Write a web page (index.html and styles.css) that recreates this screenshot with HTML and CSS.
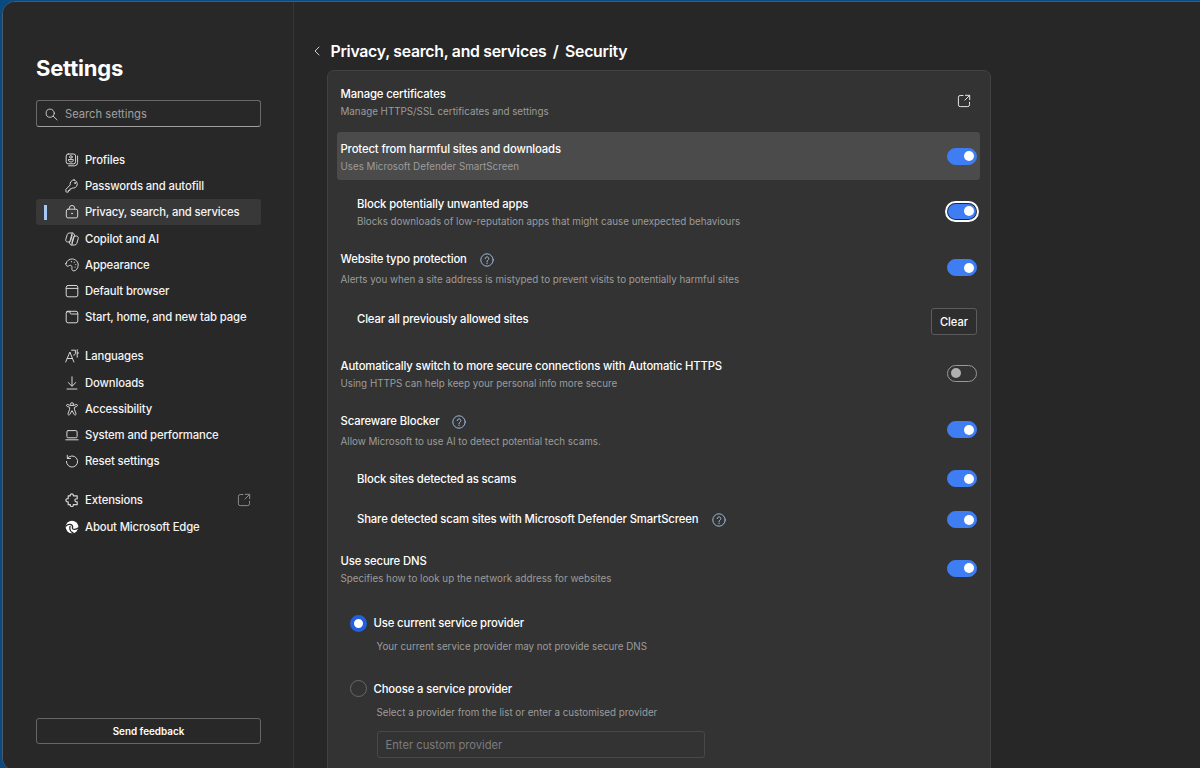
FILE: index.html
```html
<!DOCTYPE html>
<html lang="en">
<head>
    <meta charset="UTF-8">
    <meta name="viewport" content="width=device-width, initial-scale=1.0">
    <title>Settings</title>
    <link rel="stylesheet" href="styles.css">
</head>
<body>
    <!-- Shared icons -->
    <svg width="0" height="0" class="icon-defs">
        <symbol id="icon-open" viewBox="0 0 14 14">
            <path d="M6 1.5H3.2A1.8 1.8 0 0 0 1.4 3.3v7.5a1.8 1.8 0 0 0 1.8 1.8h7.5a1.8 1.8 0 0 0 1.8-1.8V8.2M8.4 1.3h4.3v4.4M12.5 1.5L7.9 6.1"/>
        </symbol>
        <symbol id="icon-help" viewBox="0 0 14 14">
            <circle cx="7" cy="7" r="6.2"/>
            <path d="M5.2 5.6a1.8 1.8 0 1 1 2.8 1.5c-.7.5-1 .8-1 1.5M7 10v.7"/>
        </symbol>
    </svg>

    <div class="window">
        <!-- Sidebar -->
        <aside class="sidebar">
            <h1 class="sidebar-title">Settings</h1>
            <div class="search">
                <svg class="search-icon" viewBox="0 0 14 14"><circle cx="5.6" cy="5.6" r="4.4"/><path d="M8.8 8.8l4.2 4"/></svg>
                <span>Search settings</span>
            </div>

            <nav class="menu">
                <div class="menu-group">
                    <a class="menu-item">
                        <svg class="icon" viewBox="0 0 14 14"><rect x="1.2" y="1" width="9.4" height="9.8" rx="2"/><circle cx="5.9" cy="4" r="1.3"/><path d="M3.5 6.6h4.8v.7c0 1-1 1.7-2.4 1.7s-2.4-.7-2.4-1.7zM12.6 3v6.6a3.2 3.2 0 0 1-3.2 3.2H3.6"/></svg>
                        Profiles
                    </a>
                    <a class="menu-item">
                        <svg class="icon" viewBox="0 0 14 14"><path d="M9.1.9a4 4 0 0 0-3.9 5L.9 10.4v2.1c0 .4.2.6.6.6h1.8v-1.6h1.6V9.9h1.3l.9-.9a4 4 0 1 0 2-8.1z"/><circle cx="10" cy="4" r=".5"/></svg>
                        Passwords and autofill
                    </a>
                    <a class="menu-item selected">
                        <svg class="icon" viewBox="0 0 14 14"><rect x="1.3" y="4.2" width="11.4" height="8.7" rx="1.8"/><path d="M4.3 4V3.2a2.7 2.7 0 0 1 5.4 0V4"/><circle cx="7" cy="8.5" r=".5"/></svg>
                        Privacy, search, and services
                    </a>
                    <a class="menu-item">
                        <svg class="icon" viewBox="0 0 14 14"><path d="M9.6 3.8L9 2a1.5 1.5 0 0 0-1.4-1H4.2c-.9 0-1.600.6-1.9 1.4L.8 7.3c-.4 1.4.5 2.7 1.9 2.7h1.4c.7 0 1.3-.5 1.5-1.2L7.2 3M4.4 10.2L5 12a1.500 1.500 0 0 0 1.400 1h3.400c.9 0 1.600-.6 1.900-1.400l1.500-4.900c.4-1.400-.5-2.700-1.900-2.700H9.900c-.7 0-1.300.5-1.500 1.200L6.800 11M7.200 1L4.700 10M9.300 4L6.800 13"/></svg>
                        Copilot and AI
                    </a>
                    <a class="menu-item">
                        <svg class="icon" viewBox="0 0 14 14"><path d="M.9 5.7C1.6 2.7 4.4.8 7.5 1c3.3.2 5.8 3 5.7 6.2-.2 3.3-2.3 5.7-4.4 5.7-1.5 0-2-1.1-1.9-2.3.2-1.4.1-2.7-.9-3.2-1.2-.6-2 .7-3.2.8C1.4 8.3.6 7.1.9 5.7z"/><circle class="dot" cx="6.5" cy="3.7" r=".6"/><circle class="dot" cx="9.3" cy="4.2" r=".6"/><circle class="dot" cx="10.8" cy="6.5" r=".6"/><circle class="dot" cx="10" cy="9" r=".6"/></svg>
                        Appearance
                    </a>
                    <a class="menu-item">
                        <svg class="icon" viewBox="0 0 14 14"><rect x="1.2" y="1.5" width="11.6" height="11.3" rx="1.8"/><path d="M1.2 4.4h11.6"/></svg>
                        Default browser
                    </a>
                    <a class="menu-item">
                        <svg class="icon" viewBox="0 0 14 14"><rect x="1.2" y="1.3" width="11.6" height="11.5" rx="1.8"/><path d="M5 1.3v1.500c0 .7.5 1.2 1.2 1.2h6.6M1.5 1.8h3.5"/></svg>
                        Start, home, and new tab page
                    </a>
                </div>
                <div class="menu-group">
                    <a class="menu-item">
                        <svg class="icon" viewBox="0 0 14 14"><path d="M.7 13L4.9 3l4 10M2.2 9.5h5.3M6.6 1.2h3.8v3.2c0 1-.6 1.7-1.7 1.7M12.2.7v7.500M12.3 4h1.5"/></svg>
                        Languages
                    </a>
                    <a class="menu-item">
                        <svg class="icon" viewBox="0 0 14 14"><path d="M7 .8v9.2M3.2 6.5L7 10.2l3.8-3.7M2 13h10"/></svg>
                        Downloads
                    </a>
                    <a class="menu-item">
                        <svg class="icon" viewBox="0 0 14 14"><circle cx="7" cy="2.2" r="1.5"/><path d="M5.5 3.6L2.8 2.5c-1.3-.4-1.9 1.3-.7 1.8l2.5 1.1v2L3 11.6c-.5 1.4 1.3 2 1.8.8L7 8.6l2.2 3.8c.5 1.2 2.3.6 1.8-.8L9.4 7.4v-2l2.5-1.1c1.2-.5.6-2.2-.7-1.8L8.5 3.6"/></svg>
                        Accessibility
                    </a>
                    <a class="menu-item">
                        <svg class="icon" viewBox="0 0 14 14"><rect x="1.9" y="2.6" width="10.2" height="7.2" rx="1.2"/><path d="M.8 11.8h12.4"/></svg>
                        System and performance
                    </a>
                    <a class="menu-item">
                        <svg class="icon" viewBox="0 0 14 14"><path d="M2.3 1.3v3.2h3.2M2.4 4.3A5.6 5.6 0 1 1 1.4 7.4"/></svg>
                        Reset settings
                    </a>
                </div>
                <div class="menu-group">
                    <a class="menu-item">
                        <svg class="icon bold" viewBox="0 0 14 14"><path d="M3.2 2.8h2.1c-.2-1.200.500-1.900 1.500-1.900s1.700.7 1.500 1.900h3.900v3c-1.500-.2-2.300.500-2.300 1.500s.8 1.700 2.300 1.500v2.900H8.300c.2 1.200-.5 1.900-1.500 1.900s-1.700-.7-1.500-1.900H3.200V8.900C1.800 9.100.9 8.400.9 7.300s.9-1.800 2.300-1.600z"/></svg>
                        Extensions
                        <svg class="icon external"><use href="#icon-open"/></svg>
                    </a>
                    <a class="menu-item">
                        <svg class="icon edge" viewBox="0 0 14 14"><circle class="dot" cx="7" cy="7" r="6.3"/><path class="swirl" d="M.8 6.2c1.6-2.200 5-2.500 6.300-.8 1.100 1.500-.1 2.400.5 3.200.8 1 3.300.8 5.400-.6M5.100 6.500c-.9 2.500.500 5.200 3 6.400"/></svg>
                        About Microsoft Edge
                    </a>
                </div>
            </nav>

            <button class="feedback">Send feedback</button>
        </aside>

        <!-- Security page -->
        <main class="content">
            <div class="page-title">
                <svg class="back" viewBox="0 0 8 10"><path d="M6 1L2 5l4 4"/></svg>
                <span>Privacy, search, and services</span>
                <span>/</span>
                <span>Security</span>
            </div>

            <section class="card">
                <div class="row">
                    <div class="text">
                        <div class="label">Manage certificates</div>
                        <div class="hint">Manage HTTPS/SSL certificates and settings</div>
                    </div>
                    <svg class="icon open"><use href="#icon-open"/></svg>
                </div>
                <div class="row highlighted">
                    <div class="text">
                        <div class="label">Protect from harmful sites and downloads</div>
                        <div class="hint">Uses Microsoft Defender SmartScreen</div>
                    </div>
                    <span class="toggle on"></span>
                </div>
                <div class="row nested">
                    <div class="text">
                        <div class="label">Block potentially unwanted apps</div>
                        <div class="hint">Blocks downloads of low-reputation apps that might cause unexpected behaviours</div>
                    </div>
                    <span class="toggle on focused"></span>
                </div>
                <div class="row tall">
                    <div class="text">
                        <div class="label">Website typo protection <svg class="help"><use href="#icon-help"/></svg></div>
                        <div class="hint">Alerts you when a site address is mistyped to prevent visits to potentially harmful sites</div>
                    </div>
                    <span class="toggle on"></span>
                </div>
                <div class="row nested with-button">
                    <div class="text">
                        <div class="label">Clear all previously allowed sites</div>
                    </div>
                    <button class="clear">Clear</button>
                </div>
                <div class="row">
                    <div class="text">
                        <div class="label">Automatically switch to more secure connections with Automatic HTTPS</div>
                        <div class="hint">Using HTTPS can help keep your personal info more secure</div>
                    </div>
                    <span class="toggle"></span>
                </div>
                <div class="row tall">
                    <div class="text">
                        <div class="label">Scareware Blocker <svg class="help"><use href="#icon-help"/></svg></div>
                        <div class="hint">Allow Microsoft to use AI to detect potential tech scams.</div>
                    </div>
                    <span class="toggle on"></span>
                </div>
                <div class="row nested single">
                    <div class="text">
                        <div class="label">Block sites detected as scams</div>
                    </div>
                    <span class="toggle on"></span>
                </div>
                <div class="row nested share">
                    <div class="text">
                        <div class="label">Share detected scam sites with Microsoft Defender SmartScreen <svg class="help"><use href="#icon-help"/></svg></div>
                    </div>
                    <span class="toggle on"></span>
                </div>
                <div class="row">
                    <div class="text">
                        <div class="label">Use secure DNS</div>
                        <div class="hint">Specifies how to look up the network address for websites</div>
                    </div>
                    <span class="toggle on"></span>
                </div>

                <div class="providers">
                    <div class="option">
                        <div class="option-head"><span class="radio checked"></span><span class="label">Use current service provider</span></div>
                        <div class="hint">Your current service provider may not provide secure DNS</div>
                    </div>
                    <div class="option">
                        <div class="option-head"><span class="radio"></span><span class="label">Choose a service provider</span></div>
                        <div class="hint">Select a provider from the list or enter a customised provider</div>
                    </div>
                    <div class="provider-input">Enter custom provider</div>
                </div>
            </section>
        </main>
    </div>
</body>
</html>
```
FILE: styles.css
```css
* {
    box-sizing: border-box;
}

body {
    margin: 0;
    height: 768px;
    overflow: hidden;
    background: #0b4a80;
    color: #fff;
    font-family: Inter, "Liberation Sans", sans-serif;
}

svg {
    fill: none;
    stroke: currentColor;
    stroke-linecap: round;
    stroke-linejoin: round;
}

button {
    padding: 0;
    background: transparent;
    color: #fff;
    font-family: inherit;
}

.icon-defs {
    display: none;
}

.window {
    display: flex;
    height: 770px;
    margin: 1px -20px 0 2px;
    border: 1px solid #4a5a68;
    border-radius: 13px;
    background: #272727;
    overflow: hidden;
}

/* Sidebar */
.sidebar {
    display: flex;
    flex-direction: column;
    width: 291px;
    flex-shrink: 0;
    padding: 52px 32px 0 33px;
    border-right: 1px solid #363636;
    background: #282828;
}

.sidebar-title {
    margin: 0;
    font-size: 22px;
    line-height: 28px;
    font-weight: 700;
    letter-spacing: -0.2px;
}

.search {
    display: flex;
    align-items: center;
    gap: 7px;
    height: 27px;
    margin-top: 18px;
    padding: 1px 0 0 8px;
    border: 1px solid #6a6a6a;
    border-bottom-color: #a0a0a0;
    border-radius: 3px;
    color: #a0a0a0;
    font-size: 11.2px;
    flex-shrink: 0;
}

.search-icon {
    width: 13px;
    height: 13px;
    color: #d0d0d0;
}

.menu {
    margin-top: 19.4px;
}

.menu-group {
    margin-bottom: 13.1px;
}

.menu-item {
    position: relative;
    display: flex;
    align-items: center;
    gap: 6px;
    height: 26.2px;
    padding: 1px 0 0 29px;
    border-radius: 3px;
    font-size: 11.3px;
    font-weight: 500;
    letter-spacing: -0.13px;
    color: #f4f4f4;
}

.menu-item.selected {
    background: #383838;
}

.menu-item.selected::before {
    content: "";
    position: absolute;
    left: 8px;
    top: 6px;
    width: 3px;
    height: 15px;
    background: #a5c7f5;
}

.icon {
    width: 14px;
    height: 14px;
    color: #d6d6d6;
    stroke-width: 1;
    flex-shrink: 0;
}

.icon.bold {
    stroke-width: 1.2;
}

.icon.edge {
    color: #fff;
}

.dot {
    fill: currentColor;
    stroke: none;
}

.swirl {
    stroke: #282828;
    stroke-width: 1.3;
}

.external {
    margin-left: auto;
    margin-right: 10px;
    color: #8a8a8a;
}

.feedback {
    height: 26px;
    margin-top: auto;
    margin-bottom: 26px;
    border: 1px solid #666;
    border-radius: 3px;
    font-size: 9.9px;
    font-weight: 600;
}

/* Page */
.content {
    flex: 1;
    padding: 38px 0 0 18px;
}

.page-title {
    display: flex;
    align-items: center;
    height: 22px;
    font-size: 15.8px;
    font-weight: 600;
    letter-spacing: -0.27px;
}

.page-title span + span {
    margin-left: 6.5px;
}

.back {
    width: 8px;
    height: 10px;
    margin-right: 10px;
    margin-left: 0.5px;
    color: #d0d0d0;
}

.card {
    display: flex;
    flex-direction: column;
    gap: 7px;
    width: 664px;
    height: 740px;
    margin: 8px 0 0 15px;
    padding: 6px 10px 0 9px;
    border: 1px solid #424242;
    border-radius: 7px;
    background: #333;
}

.row {
    display: flex;
    align-items: center;
    justify-content: space-between;
    height: 48px;
    padding: 0 3px 0 3.5px;
    border-radius: 3px;
    flex-shrink: 0;
}

.row.highlighted {
    background: #4b4b4b;
}

.row.nested {
    padding-left: 20px;
}

.row.tall {
    height: 51px;
}

.row.with-button {
    height: 42px;
}

.row.single {
    height: 33px;
}

.row.share {
    height: 35px;
}

.label {
    display: flex;
    align-items: center;
    height: 18px;
    font-size: 11.3px;
    font-weight: 500;
    letter-spacing: -0.13px;
    white-space: nowrap;
}

.hint {
    height: 17px;
    line-height: 17px;
    font-size: 9.8px;
    color: #9c9c9c;
    white-space: nowrap;
}

.text {
    padding-top: 2px;
}

.tall .label {
    height: 20px;
}

.tall .hint {
    margin-top: 2px;
}

.with-button .text {
    padding: 0 0 4px;
}

.single .text {
    padding: 0;
}

.share .text {
    padding: 0 0 2px;
}

.help {
    width: 14px;
    height: 14px;
    margin-left: 13px;
    margin-top: 2px;
    color: #9db8dc;
}

.share .help {
    margin-left: 14px;
}

.icon.open {
    margin-right: 6px;
    color: #e6e6e6;
}

/* Toggles */
.toggle {
    display: flex;
    align-items: center;
    width: 30px;
    height: 17px;
    padding: 0 3px;
    border: 1px solid #999;
    border-radius: 9px;
}

.toggle::before {
    content: "";
    width: 10px;
    height: 10px;
    border-radius: 50%;
    background: #b0b0b0;
}

.toggle.on {
    justify-content: flex-end;
    padding-right: 2px;
    border-color: #3f7df3;
    background: #3f7df3;
}

.toggle.on::before {
    background: #fff;
}

.toggle.focused {
    border-color: #1d2430;
    outline: 2px solid #fff;
}

.clear {
    width: 46px;
    height: 27px;
    padding-top: 1px;
    border: 1px solid #5c5c5c;
    border-radius: 3px;
    background: #2e2e2e;
    font-size: 11.1px;
    font-weight: 500;
}

/* DNS providers */
.providers {
    padding: 15px 0 0 13px;
}

.option {
    height: 65.5px;
}

.option-head {
    display: flex;
    align-items: center;
    gap: 6.5px;
    height: 18px;
}

.radio {
    width: 17px;
    height: 17px;
    border: 1px solid #686868;
    border-radius: 50%;
}

.radio.checked {
    border: 4px solid #2560d8;
    background: #fff;
}

.option .hint {
    margin: 6px 0 0 26.5px;
}

.provider-input {
    width: 328px;
    height: 27px;
    margin-left: 26.5px;
    margin-top: -14px;
    padding-left: 8px;
    border: 1px solid #484848;
    border-radius: 3px;
    color: #7c7c7c;
    font-size: 11.2px;
    line-height: 26px;
}
```
